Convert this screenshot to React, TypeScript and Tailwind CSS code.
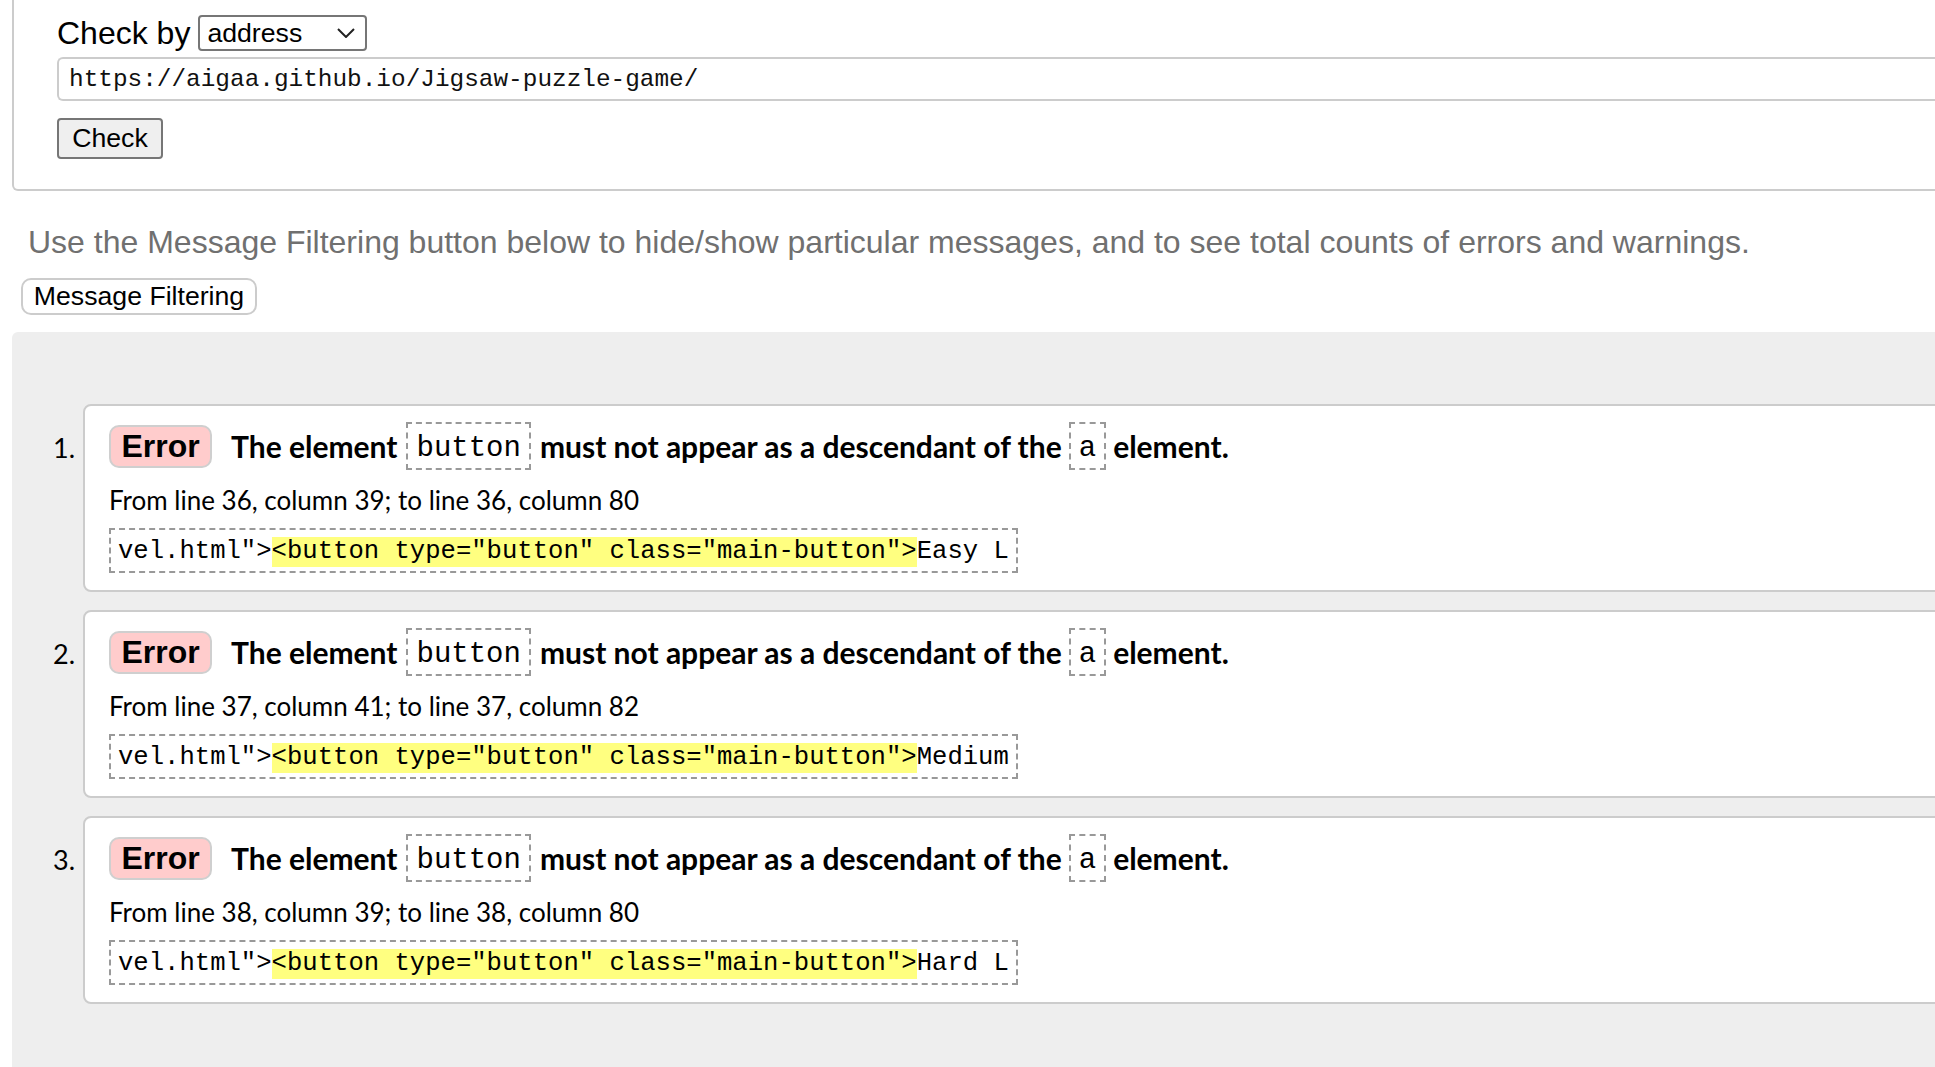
import React from "react";

const errors = [
  { n: 1, line: 36, c1: 39, c2: 80, tail: "Easy L" },
  { n: 2, line: 37, c1: 41, c2: 82, tail: "Medium" },
  { n: 3, line: 38, c1: 39, c2: 80, tail: "Hard L" },
];

function ErrorCard({ e }: { e: (typeof errors)[number] }) {
  return (
    <li className="flex items-start">
      <div className="w-[71px] shrink-0 pr-[8px] pt-[26px] text-right font-['Lato',sans-serif] text-[27px] leading-[36px]">
        {e.n}.
      </div>
      <div className="flex-1 bg-white border-2 border-[#ccc] rounded-[8px] pl-[24px] pt-[16px] pb-[17px]">
        <div className="flex items-center h-[48px] font-['Lato',sans-serif] font-bold text-[30px] whitespace-nowrap">
          <span className="h-[43px] w-[103px] flex items-center justify-center bg-[#ffcccc] border-2 border-[#cfcfcf] rounded-[10px] font-['Liberation_Sans',Arial,sans-serif] text-[32px] font-bold mr-[19px]">
            Error
          </span>
          <span>The element</span>
          <code className="mx-[9px] h-[48px] flex items-center px-[8px] pt-[5px] border-2 border-dashed border-[#999] font-['Liberation_Mono',monospace] font-normal text-[29px] leading-none">
            button
          </code>
          <span>must not appear as a descendant of the</span>
          <code className="mx-[7px] h-[48px] flex items-center px-[8px] pt-[5px] border-2 border-dashed border-[#999] font-['Liberation_Mono',monospace] font-normal text-[29px] leading-none">
            a
          </code>
          <span>element.</span>
        </div>
        <div className="mt-[14px] font-['Lato',sans-serif] text-[26px] leading-[32px] whitespace-nowrap">
          From line {e.line}, column {e.c1}; to line {e.line}, column {e.c2}
        </div>
        <div className="mt-[12px] flex">
          <div className="h-[45px] flex items-center border-2 border-dashed border-[#999] px-[7px] pt-[2px] font-['Liberation_Mono',monospace] text-[25.6px] leading-[30px] whitespace-pre">
            <span>vel.html"&gt;</span>
            <span className="bg-[#ffff80]">&lt;button type="button" class="main-button"&gt;</span>
            <span>{e.tail}</span>
          </div>
        </div>
      </div>
    </li>
  );
}

export default function App() {
  return (
    <div className="w-[1935px] h-[1067px] overflow-hidden bg-white text-black font-['Liberation_Sans',Arial,sans-serif]">
      <div className="ml-[12px] mr-[-40px] border-2 border-t-0 border-[#ccc] rounded-b-[6px] pl-[43px] pt-[15px] pb-[30px]">
        <div className="flex items-center h-[36px]">
          <span className="text-[32px] leading-none mr-[8px]">Check by</span>
          <div className="w-[169px] h-[36px] border-2 border-[#767676] rounded-[4px] flex items-center justify-between pl-[7px] pr-[10px]">
            <span className="text-[26.67px] leading-none">address</span>
            <svg width="18" height="10" viewBox="0 0 18 10" fill="none">
              <path d="M1 1 L9 9 L17 1" stroke="#222" strokeWidth="2" />
            </svg>
          </div>
        </div>
        <div className="mt-[6px] h-[44px] flex items-center border-2 border-r-0 border-[#ccc] rounded-l-[6px] pl-[10px] pt-[3px] font-['Liberation_Mono',monospace] text-[24.4px] text-[#111]">
          https://aigaa.github.io/Jigsaw-puzzle-game/
        </div>
        <button className="mt-[17px] w-[106px] h-[41px] border-2 border-[#767676] rounded-[4px] bg-[#efefef] text-[26.67px] leading-none flex items-center justify-center">
          Check
        </button>
      </div>

      <p className="mt-[33px] ml-[28px] text-[32px] leading-[36px] text-[#707070] whitespace-nowrap">
        Use the Message Filtering button below to hide/show particular messages, and to see total counts of errors and warnings.
      </p>
      <button className="mt-[18px] ml-[21px] w-[236px] h-[37px] border-2 border-[#ccc] rounded-[10px] bg-white text-[26.67px] leading-none flex items-center justify-center">
        Message Filtering
      </button>

      <div className="mt-[17px] ml-[12px] mr-[-40px] h-[800px] bg-[#eeeeee] rounded-tl-[6px] pt-[72px]">
        <ol className="flex flex-col gap-[18px] mr-[-20px]">
          {errors.map((e) => (
            <ErrorCard key={e.n} e={e} />
          ))}
        </ol>
      </div>
    </div>
  );
}
